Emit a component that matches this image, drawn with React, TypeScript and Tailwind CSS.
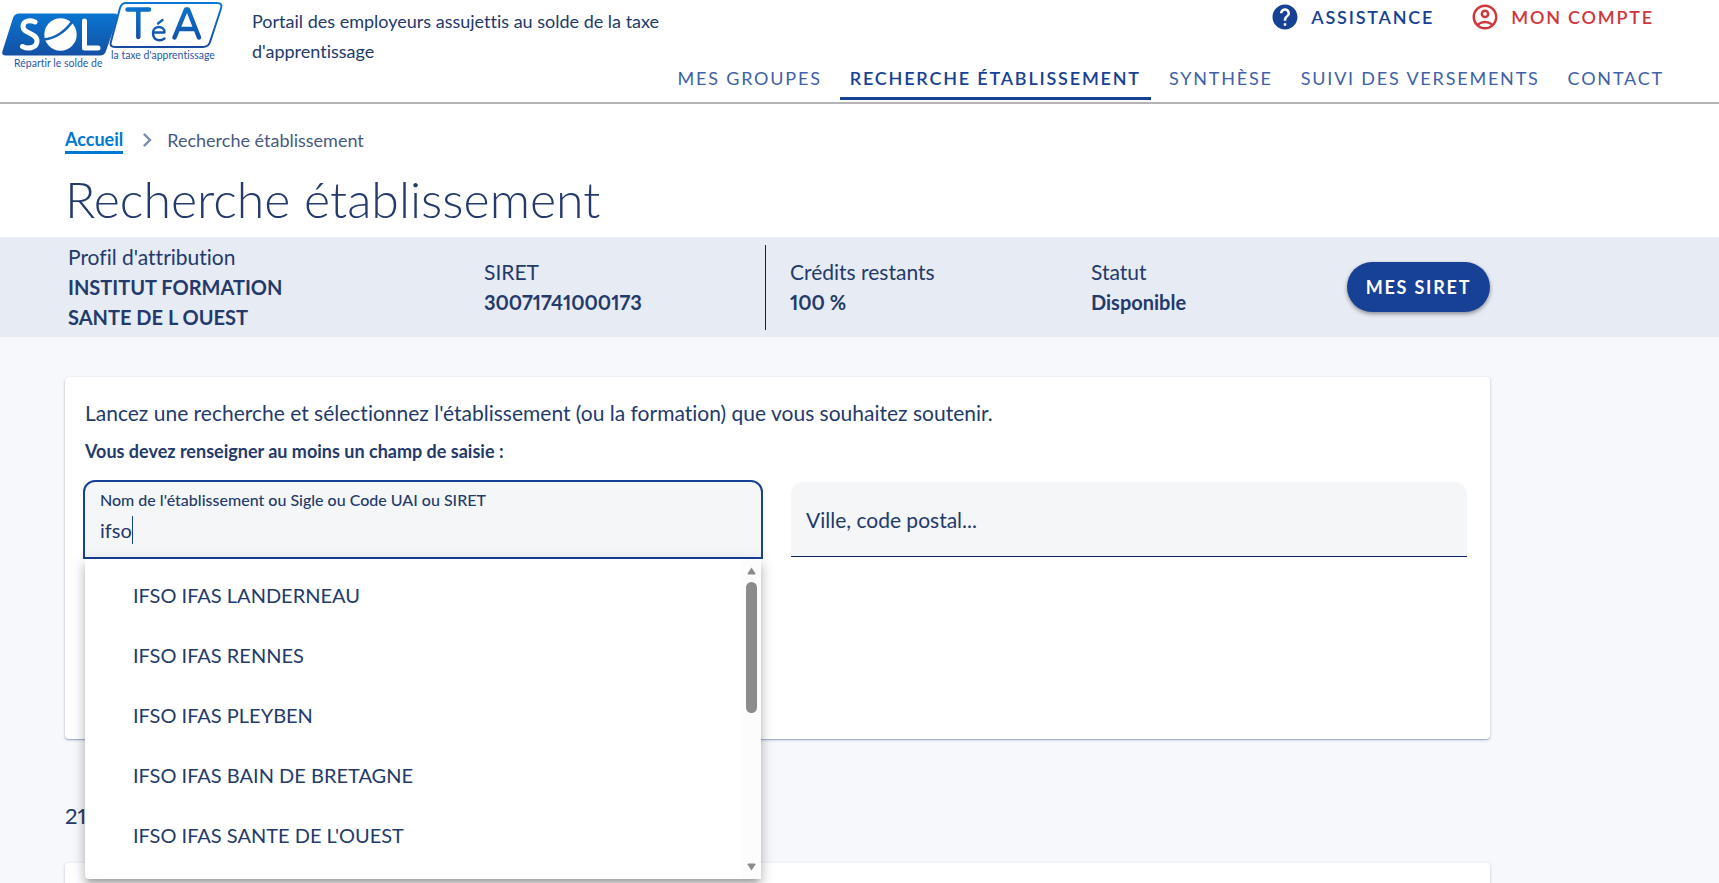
import { useState } from "react";
import { MdHelp, MdOutlineAccountCircle, MdChevronRight } from "react-icons/md";

const navLinks = [
  { label: "Mes groupes", active: false },
  { label: "Recherche établissement", active: true },
  { label: "Synthèse", active: false },
  { label: "Suivi des versements", active: false },
  { label: "Contact", active: false },
];

const suggestions = [
  "IFSO IFAS LANDERNEAU",
  "IFSO IFAS RENNES",
  "IFSO IFAS PLEYBEN",
  "IFSO IFAS BAIN DE BRETAGNE",
  "IFSO IFAS SANTE DE L'OUEST",
];

function Logo() {
  return (
    <svg width="224" height="70" viewBox="0 0 224 70" role="img" aria-label="SOLTéA" className="shrink-0">
      <defs>
        <linearGradient id="fill" x1="0" y1="0" x2="0" y2="1">
          <stop offset="0" stopColor="#0a75d1" />
          <stop offset="1" stopColor="#1450a4" />
        </linearGradient>
        <linearGradient id="ink" gradientUnits="userSpaceOnUse" x1="0" y1="2" x2="0" y2="48">
          <stop offset="0" stopColor="#0a78d4" />
          <stop offset="1" stopColor="#174a9f" />
        </linearGradient>
      </defs>
      <path d="M19 13.5H114Q119 13.5 117.500 18L106 51Q104.500 55.500 100 55.500H6Q1 55.500 2.500 51L13 18Q14.500 13.500 19 13.500Z" fill="url(#fill)" />
      <path d="M126 3H217Q223 3 221 8.500L210 42Q208.300 47 203 47H115Q109 47 111 41.500L120 8Q121.500 3 126 3Z" fill="#fff" stroke="url(#ink)" strokeWidth="2" />
      {/* SOL */}
      <g fill="none" stroke="#fff" strokeWidth="5" strokeLinecap="round" strokeLinejoin="round">
        <path d="M35 22C29 19.500 23 21 23 26.500C23 34 37 32.500 37 41C37 48 28 49.500 22.500 46.500" />
        <path d="M84.500 21V48H98" />
      </g>
      <circle cx="60.500" cy="34.500" r="16.200" fill="#fff" />
      <path d="M43 39.500C55 39 66 31 73 20.500" fill="none" stroke="#1062ba" strokeWidth="2.500" />
      {/* TéA */}
      <g fill="none" stroke="url(#ink)" strokeLinecap="round" strokeLinejoin="round">
        <path d="M127.500 9.500H149M138.300 10V37" strokeWidth="4.500" />
        <path d="M174.500 37.500L186 9.500H188L199 37.500M178.500 29H195" strokeWidth="4.500" />
        <path d="M153.500 32.500H164.500C165 25.500 153 24.500 153 33C153 41 160.500 41.500 164.500 38.500M158 23.500L162.500 20" strokeWidth="2.400" />
      </g>
      <g fill="#2b57a5" fontFamily="Lato, sans-serif" fontSize="10.5">
        <text x="14" y="67">Répartir le solde de</text>
        <text x="111" y="59">la taxe d'apprentissage</text>
      </g>
    </svg>
  );
}

function Header() {
  return (
    <header className="flex justify-between border-b-2 border-[#b4b4b4] bg-white">
      <div className="flex">
        <a href="#accueil" className="shrink-0">
          <Logo />
        </a>
        <p className="ml-7 mt-[6px] max-w-[412px] text-[18px] leading-[30px]">
          Portail des employeurs assujettis au solde de la taxe d'apprentissage
        </p>
      </div>
      <div className="flex shrink-0 flex-col items-end pr-[45px]">
        <div className="flex h-[34px] items-center gap-9 pr-5 text-[18px] font-semibold uppercase tracking-widest">
          <a href="#assistance" className="flex items-center gap-[11px] text-[#174194]">
            <MdHelp className="size-[30px]" />
            Assistance
          </a>
          <a href="#compte" className="flex items-center gap-[11px] text-[#d0363b]">
            <MdOutlineAccountCircle className="size-[30px]" />
            Mon compte
          </a>
        </div>
        <nav className="mt-[25px] mb-[2px] flex gap-2 text-[18px] uppercase leading-[38px] tracking-widest">
          {navLinks.map((link) => (
            <a
              key={link.label}
              href="#nav"
              className={
                link.active
                  ? "border-b-[3px] border-[#174194] px-[10px] font-semibold text-[#174194]"
                  : "border-b-[3px] border-transparent px-[10px] text-[#4061a8]"
              }
            >
              {link.label}
            </a>
          ))}
        </nav>
      </div>
    </header>
  );
}

function Info({ label, value }: { label: string; value: string }) {
  return (
    <div>
      <div className="text-[21px]">{label}</div>
      <div className="font-bold proportional-nums">{value}</div>
    </div>
  );
}

function ProfileBar() {
  return (
    <section className="bg-[#e7ebf4] pl-[68px] pr-[229px] text-[20px] leading-[30px]">
      <div className="grid min-h-[100px] grid-cols-[416fr_281fr_326fr_256fr_143fr] items-center">
        <div className="max-w-[240px]">
          <Info label="Profil d'attribution" value="INSTITUT FORMATION SANTE DE L OUEST" />
        </div>
        <Info label="SIRET" value="30071741000173" />
        <div className="flex h-[85px] items-center border-l border-[#0b2463] pl-6">
          <Info label="Crédits restants" value="100 %" />
        </div>
        <Info label="Statut" value="Disponible" />
        <button className="h-[50px] whitespace-nowrap rounded-full bg-[#174194] text-[18px] font-bold tracking-widest text-white shadow-[0_2px_4px_rgba(0,0,0,0.4)]">
          MES SIRET
        </button>
      </div>
    </section>
  );
}

function Suggestions() {
  return (
    <div className="absolute inset-x-0 top-full z-10 flex rounded-b bg-white shadow-[0_5px_5px_-3px_rgba(0,0,0,0.2),0_8px_10px_1px_rgba(0,0,0,0.14),0_3px_14px_2px_rgba(0,0,0,0.12)]">
      <ul role="listbox" aria-label="Établissements" className="flex-1 pt-[6px] pb-[14px]">
        {suggestions.map((item) => (
          <li key={item} role="option" aria-selected={false} className="px-12 text-[20px] leading-[60px]">
            {item}
          </li>
        ))}
      </ul>
      <div className="flex w-[19px] flex-col items-center bg-[#fcfcfc] py-2">
        <svg width="9" height="8" viewBox="0 0 9 8" fill="#8b8b8b">
          <path d="M4.500 0.500L8.500 6.500Q8.500 7.500 7.500 7.500H1.500Q0.500 7.500 0.500 6.500Z" />
        </svg>
        <div className="mt-[7px] h-[131px] w-[11px] rounded-full bg-[#8b8b8b]" />
        <svg width="9" height="8" viewBox="0 0 9 8" fill="#8b8b8b" className="mt-auto">
          <path d="M4.500 7.500L8.500 1.500Q8.500 0.500 7.500 0.500H1.500Q0.500 0.500 0.500 1.500Z" />
        </svg>
      </div>
    </div>
  );
}

function SearchCard() {
  const [name, setName] = useState("ifso");
  const [city, setCity] = useState("");

  return (
    <section className="min-h-[362px] rounded bg-white px-5 pt-[21px] shadow-[0_1px_3px_rgba(11,36,99,0.25),0_1px_1px_rgba(11,36,99,0.2)]">
      <p className="text-[21px] leading-[30px]">
        Lancez une recherche et sélectionnez l'établissement (ou la formation) que vous souhaitez soutenir.
      </p>
      <p className="mt-2 text-[18px] font-bold leading-[30px]">
        Vous devez renseigner au moins un champ de saisie :
      </p>
      <form className="mt-4 mr-[3px] grid grid-cols-2 gap-[30px]">
        <div className="relative h-[77px]">
          <div className="absolute -inset-x-[2px] -top-[2px] bottom-0 rounded-t-xl border-2 border-[#174194] bg-[#f4f6f8] px-[15px] pt-[6px]">
            <label htmlFor="name" className="block text-[16px] font-medium leading-[24px]">
              Nom de l'établissement ou Sigle ou Code UAI ou SIRET
            </label>
            <div className="relative">
              <input
                id="name"
                value={name}
                onChange={(e) => setName(e.target.value)}
                className="h-[36px] w-full bg-transparent text-[20px] caret-transparent outline-none"
              />
              <span className="absolute left-8 top-1 h-7 w-px bg-[#174194]" />
            </div>
          </div>
          <Suggestions />
        </div>
        <input
          aria-label="Ville, code postal..."
          placeholder="Ville, code postal..."
          value={city}
          onChange={(e) => setCity(e.target.value)}
          className="h-[75px] rounded-t-xl border-b border-[#0b2463] bg-[#f4f6f8] px-[15px] text-[21px] outline-none placeholder:text-[#233a6b]"
        />
      </form>
    </section>
  );
}

export default function App() {
  return (
    <div className="h-screen overflow-hidden bg-[#f6f8fc] font-[Lato,sans-serif] text-[#233a6b] [font-variant-ligatures:none]">
      <Header />
      <div className="bg-white px-[65px] pt-[21px]">
        <nav aria-label="Fil d'Ariane" className="flex items-center text-[18px] leading-[30px]">
          <a href="#accueil" className="border-b-[3px] border-[#0078d3] font-bold leading-[24px] text-[#0078d3]">
            Accueil
          </a>
          <MdChevronRight className="ml-[10px] mr-[6px] size-[28px] text-[#7d8cab]" />
          <span className="text-[#47597f]">Recherche établissement</span>
        </nav>
        <h1 className="pt-4 pb-[10px] text-[50px] font-light leading-[56px]">Recherche établissement</h1>
      </div>
      <ProfileBar />
      <main className="pl-[65px] pr-[229px] pt-10">
        <SearchCard />
        <p className="mt-[62px] text-[22px] leading-[30px] proportional-nums">21</p>
        <section className="mt-8 h-40 rounded bg-white shadow-[0_1px_3px_rgba(11,36,99,0.25)]" />
      </main>
    </div>
  );
}
